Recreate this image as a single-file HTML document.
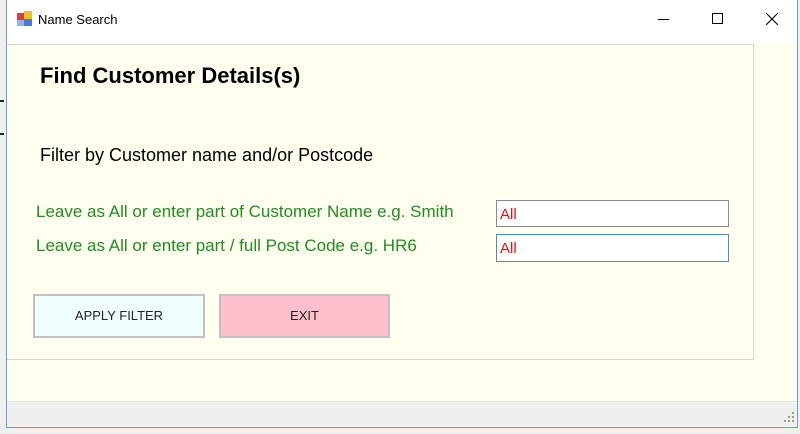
<!DOCTYPE html>
<html><head><style>
*{margin:0;padding:0;box-sizing:border-box}
body{width:800px;height:434px;background:#f0f0f0;position:relative;overflow:hidden;font-family:"Liberation Sans",Arial,sans-serif}
.win{position:absolute;left:6px;top:0;width:792px;height:428px;background:#fffff0;border:1px solid #6d9ccf;border-top:none}
.title{position:absolute;left:0;top:0;width:790px;height:43px;background:#fff}
.panel{position:absolute;left:0;top:44px;width:747px;height:316px;border:1px solid #d8d8d0;border-left:none;background:#fffff0}
.abs{position:absolute;white-space:nowrap}
.tb{position:absolute;background:#fff;color:#e01010;font-size:15px;padding:5px 0 0 3px}
.btn{position:absolute;border:2px solid #c0c0c0;font-size:13px;color:#222;text-align:center;line-height:40px}
.status{position:absolute;left:0;top:401px;width:790px;height:26px;background:#f0f0f0;border-top:1px solid #e0e0e0}
</style></head><body>
<div style="position:absolute;left:0;top:100px;width:4px;height:2px;background:#222"></div>
<div style="position:absolute;left:0;top:133px;width:4px;height:2px;background:#222"></div>
<div class="win">
 <div class="title">
  <svg class="abs" style="left:10px;top:11px" width="16" height="16"><rect x="0" y="2" width="7" height="7" fill="#d04040"/><rect x="7" y="0" width="8" height="8" fill="#f0c020"/><rect x="0" y="9" width="7" height="6" fill="#a0b0d0"/><rect x="7" y="8" width="8" height="7" fill="#4080d0"/></svg>
  <div class="abs" style="left:31px;top:12px;font-size:13px;color:#000">Name Search</div>
  <div class="abs" style="left:651px;top:19px;width:11px;height:1px;background:#000"></div>
  <div class="abs" style="left:705px;top:13px;width:11px;height:11px;border:1px solid #000"></div>
  <svg class="abs" style="left:759px;top:13px" width="12" height="12"><path d="M0 0L12 12M12 0L0 12" stroke="#000" stroke-width="1.1"/></svg>
 </div>
 <div class="panel"></div>
 <div class="abs" style="left:33px;top:63px;font-size:22px;font-weight:bold;color:#000">Find Customer Details(s)</div>
 <div class="abs" style="left:33px;top:145px;font-size:18px;color:#000">Filter by Customer name and/or Postcode</div>
 <div class="abs" style="left:29px;top:202px;font-size:17px;color:#228b22">Leave as All or enter part of Customer Name e.g. Smith</div>
 <div class="abs" style="left:29px;top:236px;font-size:17px;color:#228b22">Leave as All or enter part / full Post Code e.g. HR6</div>
 <div class="tb" style="left:489px;top:200px;width:233px;height:27px;border:1px solid #8a8a8a">All</div>
 <div class="tb" style="left:489px;top:234px;width:233px;height:28px;border:1px solid #4a8ec8">All</div>
 <div class="btn" style="left:26px;top:294px;width:172px;height:44px;background:#f0ffff">APPLY FILTER</div>
 <div class="btn" style="left:212px;top:294px;width:171px;height:44px;background:#ffc0cb">EXIT</div>
 <div class="status"></div>
 <svg class="abs" style="left:776px;top:411px" width="12" height="12" fill="#999"><rect x="9" y="1" width="2" height="2"/><rect x="5" y="5" width="2" height="2"/><rect x="9" y="5" width="2" height="2"/><rect x="1" y="9" width="2" height="2"/><rect x="5" y="9" width="2" height="2"/><rect x="9" y="9" width="2" height="2"/></svg>
</div>
</body></html>
